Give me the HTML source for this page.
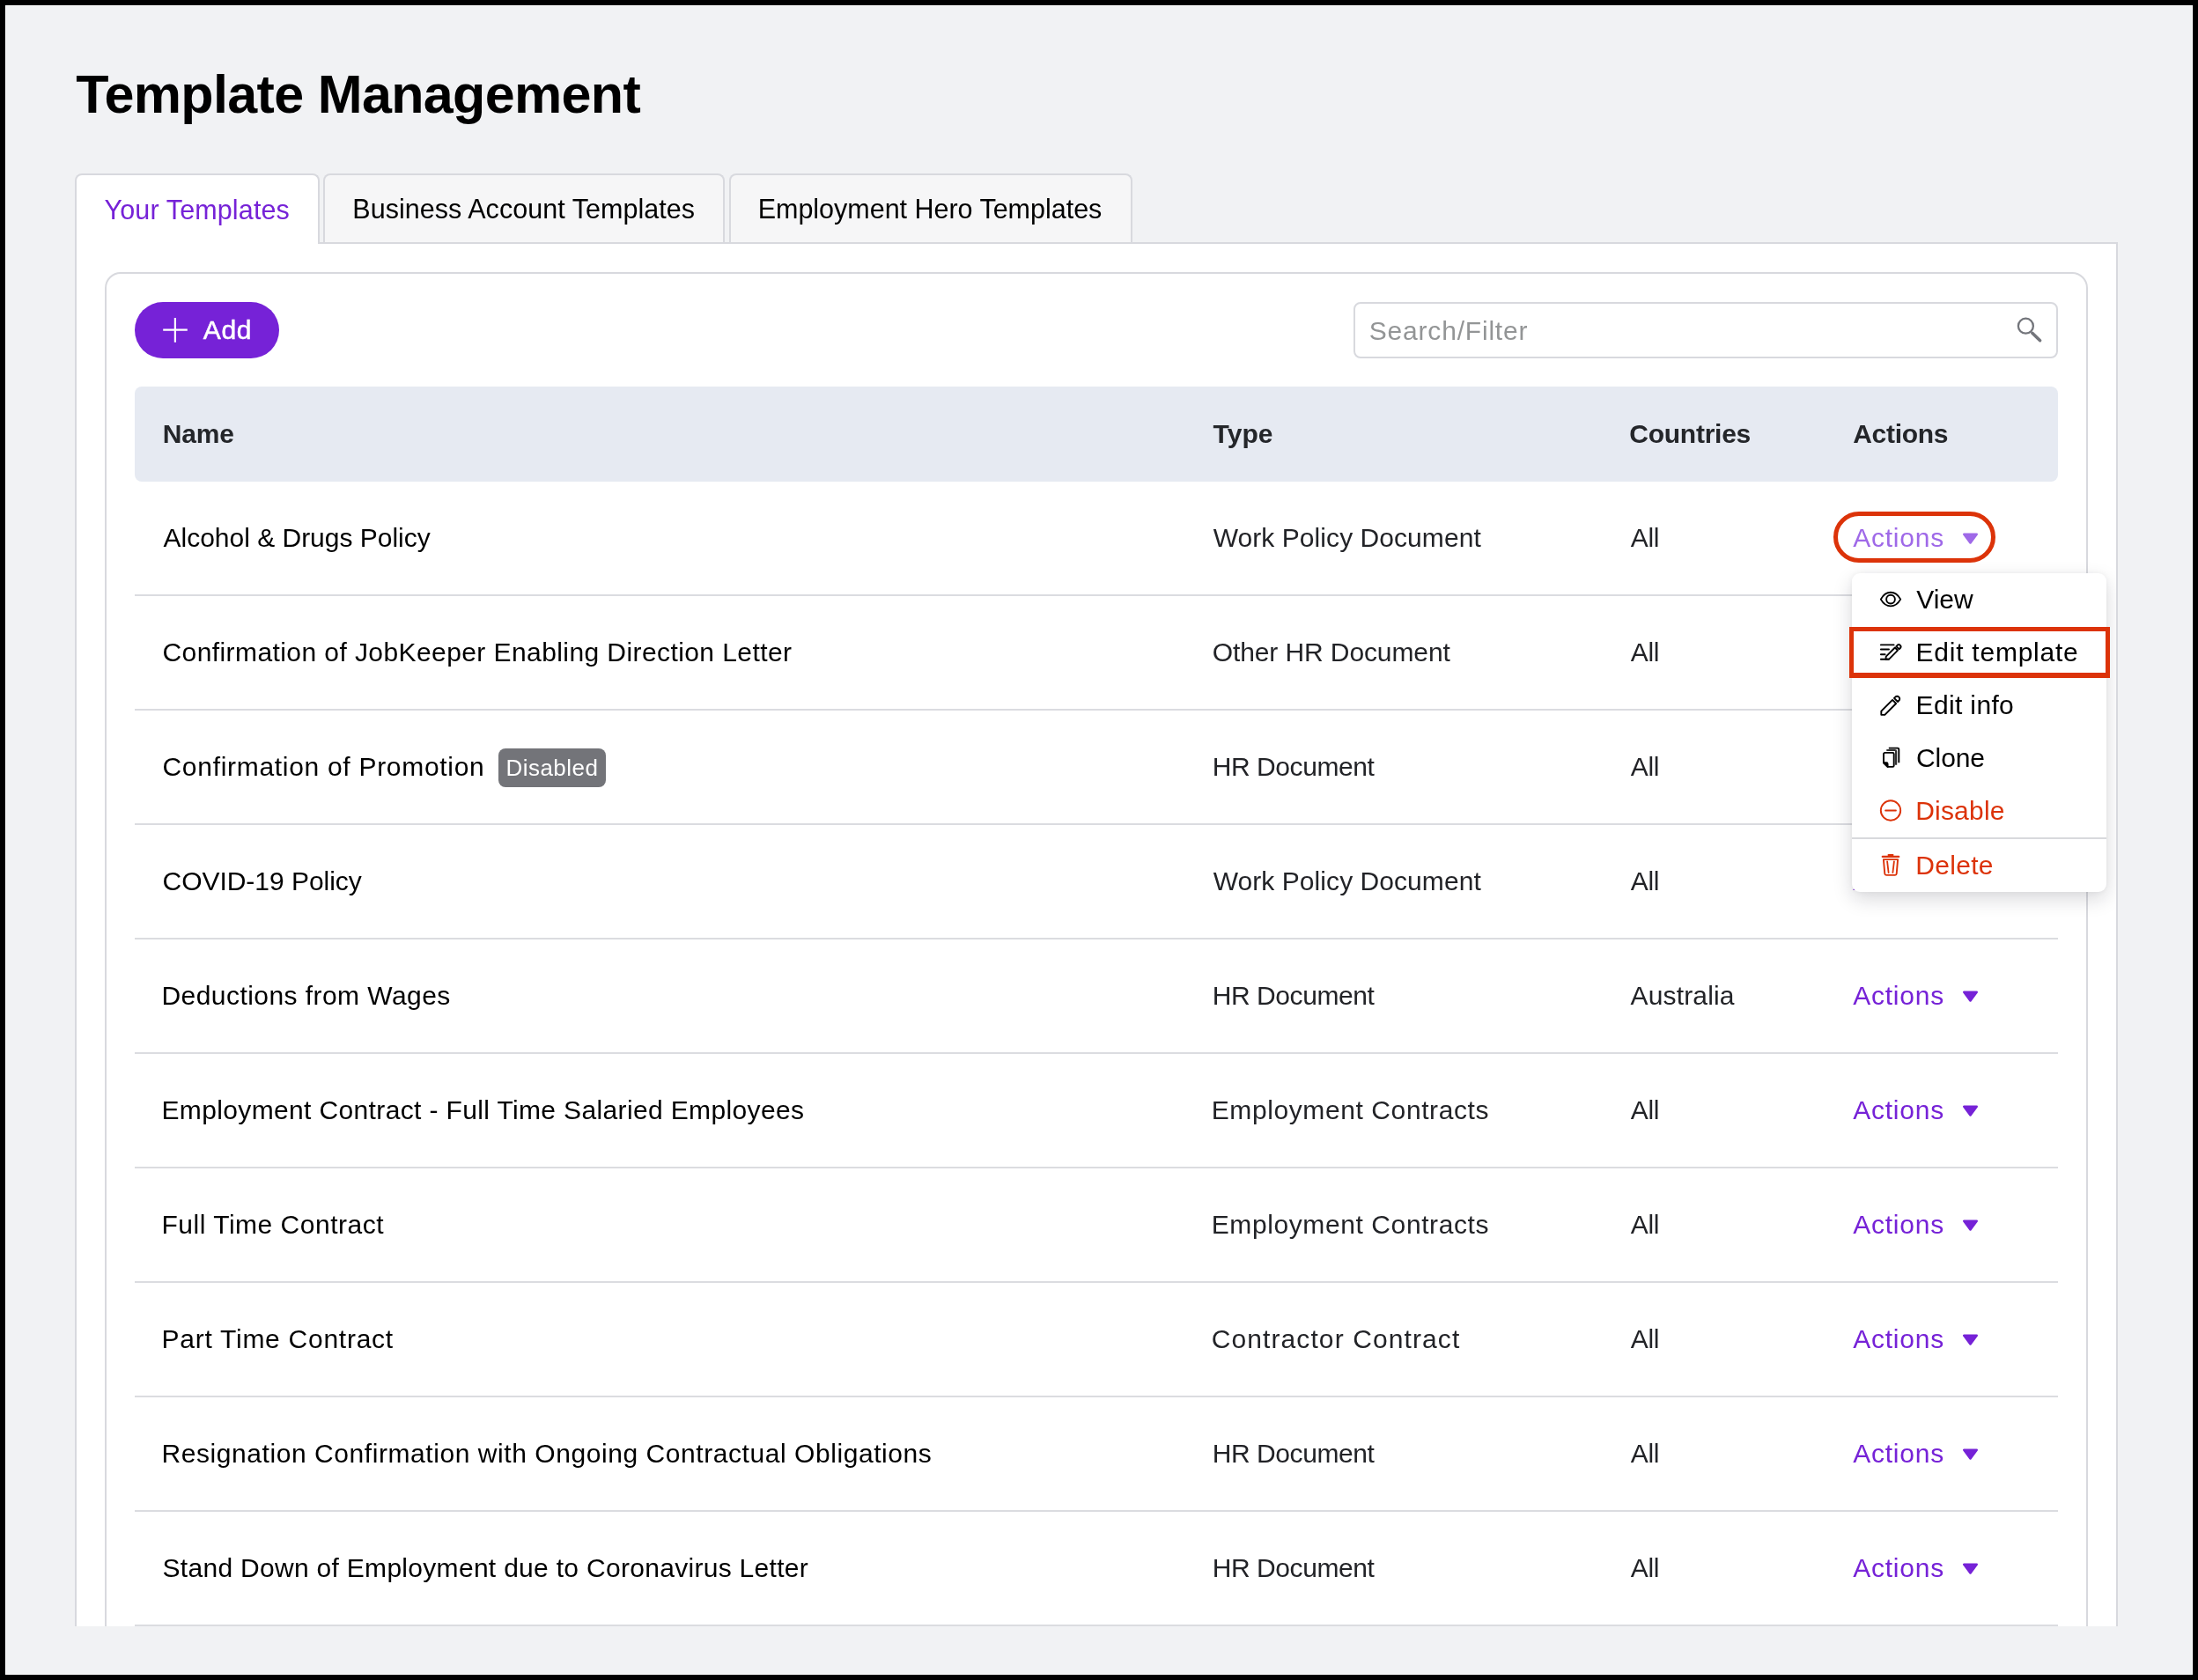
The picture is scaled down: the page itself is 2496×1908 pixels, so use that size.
<!DOCTYPE html>
<html lang="en">
<head>
<meta charset="utf-8">
<title>Template Management</title>
<style>
html,body{margin:0;padding:0;}
body{width:2496px;height:1908px;background:#000;overflow:hidden;position:relative;font-family:"Liberation Sans", sans-serif;will-change:transform;}
.frame{position:absolute;left:6px;top:6px;width:2484px;height:1896px;box-sizing:border-box;border:1px solid #fff;background:#f1f2f4;}
.t{position:absolute;white-space:nowrap;margin:0;padding:0;}
.abs{position:absolute;box-sizing:border-box;}
.panel{left:85px;top:275px;width:2320px;height:1572px;background:#fff;border:2px solid #d8d9de;border-bottom:none;overflow:hidden;}
.tab{top:197px;height:80px;border:2px solid #d8d9de;border-bottom:none;border-radius:8px 8px 0 0;background:#f6f6f7;}
.tab.on{background:#fff;}
.card{left:119px;top:309px;width:2252px;height:1600px;border:2px solid #d8d9de;border-radius:18px;background:#fff;}
.add{left:153px;top:343px;width:164px;height:64px;border-radius:32px;background:#7622d7;}
.search{left:1537px;top:343px;width:800px;height:64px;border:2px solid #d8d9de;border-radius:8px;background:#fff;}
.thead{left:153px;top:439px;width:2184px;height:108px;border-radius:8px;background:#e6eaf2;}
.div{left:153px;width:2184px;height:2px;background:#dbdce0;}
.badge{left:566px;top:850px;width:122px;height:44px;border-radius:8px;background:#737479;}
.menu{left:2103px;top:651px;width:289px;height:362px;border-radius:9px;background:#fff;box-shadow:0 8px 22px rgba(20,20,40,0.16),0 0 6px rgba(20,20,40,0.05);}
.msep{left:2103px;top:951px;width:289px;height:2px;background:#d8d9dd;}
.hl-pill{left:2082px;top:581px;width:184px;height:58px;border:5px solid #dc3309;border-radius:29px;}
.hl-rect{left:2100px;top:712px;width:296px;height:58px;border:5px solid #dc3309;border-bottom-width:6px;}
svg{position:absolute;overflow:visible;}
</style>
</head>
<body>
<div class="frame"></div>

<div class="t " id="t0" style="left:86.30px;top:68.16px;font-size:61px;line-height:79px;color:#000;font-weight:bold;letter-spacing:-0.645px;">Template Management</div>
<div class="abs panel"></div>
<div class="abs tab on" style="left:85px;width:278px;height:80px;"></div>
<div class="abs tab" style="left:367px;width:456px;height:78px;"></div>
<div class="abs tab" style="left:828px;width:458px;height:78px;"></div>
<div class="t " id="t1" style="left:118.50px;top:217.63px;font-size:30.5px;line-height:40px;color:#7622d7;letter-spacing:0.138px;">Your Templates</div>
<div class="t " id="t2" style="left:400.30px;top:216.63px;font-size:30.5px;line-height:40px;color:#000;letter-spacing:0.040px;">Business Account Templates</div>
<div class="t " id="t3" style="left:860.70px;top:216.63px;font-size:30.5px;line-height:40px;color:#000;letter-spacing:-0.016px;">Employment Hero Templates</div>
<div class="abs" style="left:87px;top:277px;width:2316px;height:1570px;overflow:hidden;"><div class="abs" style="left:-87px;top:-277px;width:2496px;height:1908px;">
<div class="abs card"></div>
<div class="abs add"></div>
<svg style="left:183px;top:359px;" width="32" height="32" viewBox="0 0 32 32"><path d="M2.2 15.6H29.8M15.9 2V29.8" stroke="#fff" stroke-width="2.2" fill="none" stroke-linecap="butt"/></svg>
<div class="t " id="t4" style="left:230.70px;top:354.71px;font-size:30px;line-height:39px;color:#fff;letter-spacing:0.700px;-webkit-text-stroke:0.5px #fff;">Add</div>
<div class="abs search"></div>
<div class="t " id="t5" style="left:1554.80px;top:356.31px;font-size:30px;line-height:39px;color:#939596;letter-spacing:0.800px;">Search/Filter</div>
<svg style="left:2286px;top:356px;" width="36" height="36" viewBox="0 0 36 36"><circle cx="14.4" cy="14.2" r="8.5" stroke="#73757b" stroke-width="2.3" fill="none"/><path d="M21.8 22.3L30.6 30.7" stroke="#73757b" stroke-width="3.6" stroke-linecap="round" fill="none"/></svg>
<div class="abs thead"></div>
<div class="t " id="t6" style="left:184.80px;top:473.00px;font-size:30px;line-height:39px;color:#24262a;font-weight:bold;letter-spacing:-0.200px;">Name</div>
<div class="t " id="t7" style="left:1377.60px;top:473.00px;font-size:30px;line-height:39px;color:#24262a;font-weight:bold;">Type</div>
<div class="t " id="t8" style="left:1850.30px;top:473.00px;font-size:30px;line-height:39px;color:#24262a;font-weight:bold;letter-spacing:-0.250px;">Countries</div>
<div class="t " id="t9" style="left:2104.20px;top:473.00px;font-size:30px;line-height:39px;color:#24262a;font-weight:bold;letter-spacing:-0.300px;">Actions</div>
<div class="t " id="t10" style="left:185.50px;top:590.81px;font-size:30px;line-height:39px;color:#000;letter-spacing:-0.010px;">Alcohol &amp; Drugs Policy</div>
<div class="t " id="t11" style="left:1377.70px;top:590.81px;font-size:30px;line-height:39px;color:#222327;letter-spacing:0.063px;">Work Policy Document</div>
<div class="t " id="t12" style="left:1851.80px;top:590.81px;font-size:30px;line-height:39px;color:#222327;letter-spacing:-0.400px;">All</div>
<div class="t " id="t13" style="left:2104.20px;top:590.81px;font-size:30px;line-height:39px;color:#9f69e8;letter-spacing:0.766px;">Actions</div>
<svg style="left:2227px;top:604px;" width="21" height="16" viewBox="0 0 21 16"><path d="M3.3 2.7H17.7L10.5 12.5Z" fill="#9f69e8" stroke="#9f69e8" stroke-width="2.6" stroke-linejoin="round"/></svg>
<div class="abs div" style="top:675px;"></div>
<div class="t " id="t14" style="left:184.50px;top:720.81px;font-size:30px;line-height:39px;color:#000;letter-spacing:0.416px;">Confirmation of JobKeeper Enabling Direction Letter</div>
<div class="t " id="t15" style="left:1376.70px;top:720.81px;font-size:30px;line-height:39px;color:#222327;letter-spacing:-0.100px;">Other HR Document</div>
<div class="t " id="t16" style="left:1851.80px;top:720.81px;font-size:30px;line-height:39px;color:#222327;letter-spacing:-0.400px;">All</div>
<div class="t " id="t17" style="left:2104.20px;top:720.81px;font-size:30px;line-height:39px;color:#7622d7;letter-spacing:0.766px;">Actions</div>
<svg style="left:2227px;top:734px;" width="21" height="16" viewBox="0 0 21 16"><path d="M3.3 2.7H17.7L10.5 12.5Z" fill="#7622d7" stroke="#7622d7" stroke-width="2.6" stroke-linejoin="round"/></svg>
<div class="abs div" style="top:805px;"></div>
<div class="t " id="t18" style="left:184.50px;top:850.81px;font-size:30px;line-height:39px;color:#000;letter-spacing:0.699px;">Confirmation of Promotion</div>
<div class="t " id="t19" style="left:1376.70px;top:850.81px;font-size:30px;line-height:39px;color:#222327;letter-spacing:-0.420px;">HR Document</div>
<div class="t " id="t20" style="left:1851.80px;top:850.81px;font-size:30px;line-height:39px;color:#222327;letter-spacing:-0.400px;">All</div>
<div class="t " id="t21" style="left:2104.20px;top:850.81px;font-size:30px;line-height:39px;color:#7622d7;letter-spacing:0.766px;">Actions</div>
<svg style="left:2227px;top:864px;" width="21" height="16" viewBox="0 0 21 16"><path d="M3.3 2.7H17.7L10.5 12.5Z" fill="#7622d7" stroke="#7622d7" stroke-width="2.6" stroke-linejoin="round"/></svg>
<div class="abs div" style="top:935px;"></div>
<div class="t " id="t22" style="left:184.50px;top:980.81px;font-size:30px;line-height:39px;color:#000;letter-spacing:-0.029px;">COVID-19 Policy</div>
<div class="t " id="t23" style="left:1377.70px;top:980.81px;font-size:30px;line-height:39px;color:#222327;letter-spacing:0.063px;">Work Policy Document</div>
<div class="t " id="t24" style="left:1851.80px;top:980.81px;font-size:30px;line-height:39px;color:#222327;letter-spacing:-0.400px;">All</div>
<div class="t " id="t25" style="left:2104.20px;top:980.81px;font-size:30px;line-height:39px;color:#7622d7;letter-spacing:0.766px;">Actions</div>
<svg style="left:2227px;top:994px;" width="21" height="16" viewBox="0 0 21 16"><path d="M3.3 2.7H17.7L10.5 12.5Z" fill="#7622d7" stroke="#7622d7" stroke-width="2.6" stroke-linejoin="round"/></svg>
<div class="abs div" style="top:1065px;"></div>
<div class="t " id="t26" style="left:183.50px;top:1110.81px;font-size:30px;line-height:39px;color:#000;letter-spacing:0.440px;">Deductions from Wages</div>
<div class="t " id="t27" style="left:1376.70px;top:1110.81px;font-size:30px;line-height:39px;color:#222327;letter-spacing:-0.420px;">HR Document</div>
<div class="t " id="t28" style="left:1851.60px;top:1110.81px;font-size:30px;line-height:39px;color:#222327;letter-spacing:0.151px;">Australia</div>
<div class="t " id="t29" style="left:2104.20px;top:1110.81px;font-size:30px;line-height:39px;color:#7622d7;letter-spacing:0.766px;">Actions</div>
<svg style="left:2227px;top:1124px;" width="21" height="16" viewBox="0 0 21 16"><path d="M3.3 2.7H17.7L10.5 12.5Z" fill="#7622d7" stroke="#7622d7" stroke-width="2.6" stroke-linejoin="round"/></svg>
<div class="abs div" style="top:1195px;"></div>
<div class="t " id="t30" style="left:183.50px;top:1240.81px;font-size:30px;line-height:39px;color:#000;letter-spacing:0.359px;">Employment Contract - Full Time Salaried Employees</div>
<div class="t " id="t31" style="left:1375.70px;top:1240.81px;font-size:30px;line-height:39px;color:#222327;letter-spacing:0.600px;">Employment Contracts</div>
<div class="t " id="t32" style="left:1851.80px;top:1240.81px;font-size:30px;line-height:39px;color:#222327;letter-spacing:-0.400px;">All</div>
<div class="t " id="t33" style="left:2104.20px;top:1240.81px;font-size:30px;line-height:39px;color:#7622d7;letter-spacing:0.766px;">Actions</div>
<svg style="left:2227px;top:1254px;" width="21" height="16" viewBox="0 0 21 16"><path d="M3.3 2.7H17.7L10.5 12.5Z" fill="#7622d7" stroke="#7622d7" stroke-width="2.6" stroke-linejoin="round"/></svg>
<div class="abs div" style="top:1325px;"></div>
<div class="t " id="t34" style="left:183.50px;top:1370.81px;font-size:30px;line-height:39px;color:#000;letter-spacing:0.506px;">Full Time Contract</div>
<div class="t " id="t35" style="left:1375.70px;top:1370.81px;font-size:30px;line-height:39px;color:#222327;letter-spacing:0.600px;">Employment Contracts</div>
<div class="t " id="t36" style="left:1851.80px;top:1370.81px;font-size:30px;line-height:39px;color:#222327;letter-spacing:-0.400px;">All</div>
<div class="t " id="t37" style="left:2104.20px;top:1370.81px;font-size:30px;line-height:39px;color:#7622d7;letter-spacing:0.766px;">Actions</div>
<svg style="left:2227px;top:1384px;" width="21" height="16" viewBox="0 0 21 16"><path d="M3.3 2.7H17.7L10.5 12.5Z" fill="#7622d7" stroke="#7622d7" stroke-width="2.6" stroke-linejoin="round"/></svg>
<div class="abs div" style="top:1455px;"></div>
<div class="t " id="t38" style="left:183.50px;top:1500.81px;font-size:30px;line-height:39px;color:#000;letter-spacing:0.741px;">Part Time Contract</div>
<div class="t " id="t39" style="left:1375.70px;top:1500.81px;font-size:30px;line-height:39px;color:#222327;letter-spacing:1.100px;">Contractor Contract</div>
<div class="t " id="t40" style="left:1851.80px;top:1500.81px;font-size:30px;line-height:39px;color:#222327;letter-spacing:-0.400px;">All</div>
<div class="t " id="t41" style="left:2104.20px;top:1500.81px;font-size:30px;line-height:39px;color:#7622d7;letter-spacing:0.766px;">Actions</div>
<svg style="left:2227px;top:1514px;" width="21" height="16" viewBox="0 0 21 16"><path d="M3.3 2.7H17.7L10.5 12.5Z" fill="#7622d7" stroke="#7622d7" stroke-width="2.6" stroke-linejoin="round"/></svg>
<div class="abs div" style="top:1585px;"></div>
<div class="t " id="t42" style="left:183.50px;top:1630.81px;font-size:30px;line-height:39px;color:#000;letter-spacing:0.564px;">Resignation Confirmation with Ongoing Contractual Obligations</div>
<div class="t " id="t43" style="left:1376.70px;top:1630.81px;font-size:30px;line-height:39px;color:#222327;letter-spacing:-0.420px;">HR Document</div>
<div class="t " id="t44" style="left:1851.80px;top:1630.81px;font-size:30px;line-height:39px;color:#222327;letter-spacing:-0.400px;">All</div>
<div class="t " id="t45" style="left:2104.20px;top:1630.81px;font-size:30px;line-height:39px;color:#7622d7;letter-spacing:0.766px;">Actions</div>
<svg style="left:2227px;top:1644px;" width="21" height="16" viewBox="0 0 21 16"><path d="M3.3 2.7H17.7L10.5 12.5Z" fill="#7622d7" stroke="#7622d7" stroke-width="2.6" stroke-linejoin="round"/></svg>
<div class="abs div" style="top:1715px;"></div>
<div class="t " id="t46" style="left:184.50px;top:1760.81px;font-size:30px;line-height:39px;color:#000;letter-spacing:0.298px;">Stand Down of Employment due to Coronavirus Letter</div>
<div class="t " id="t47" style="left:1376.70px;top:1760.81px;font-size:30px;line-height:39px;color:#222327;letter-spacing:-0.420px;">HR Document</div>
<div class="t " id="t48" style="left:1851.80px;top:1760.81px;font-size:30px;line-height:39px;color:#222327;letter-spacing:-0.400px;">All</div>
<div class="t " id="t49" style="left:2104.20px;top:1760.81px;font-size:30px;line-height:39px;color:#7622d7;letter-spacing:0.766px;">Actions</div>
<svg style="left:2227px;top:1774px;" width="21" height="16" viewBox="0 0 21 16"><path d="M3.3 2.7H17.7L10.5 12.5Z" fill="#7622d7" stroke="#7622d7" stroke-width="2.6" stroke-linejoin="round"/></svg>
<div class="abs div" style="top:1845px;"></div>
<div class="abs badge"></div>
<div class="t " id="t50" style="left:574.50px;top:855.39px;font-size:26px;line-height:34px;color:#fff;letter-spacing:0.457px;">Disabled</div>
<div class="abs hl-pill"></div>
<div class="abs menu"></div>
<div class="abs msep"></div>
<div class="t " id="t51" style="left:2176.20px;top:660.71px;font-size:30px;line-height:39px;color:#000;">View</div>
<div class="t " id="t52" style="left:2175.60px;top:720.71px;font-size:30px;line-height:39px;color:#000;letter-spacing:0.750px;">Edit template</div>
<div class="t " id="t53" style="left:2175.60px;top:780.50px;font-size:30px;line-height:39px;color:#000;letter-spacing:0.350px;">Edit info</div>
<div class="t " id="t54" style="left:2176.00px;top:840.50px;font-size:30px;line-height:39px;color:#000;letter-spacing:-0.100px;">Clone</div>
<div class="t " id="t55" style="left:2175.20px;top:900.71px;font-size:30px;line-height:39px;color:#dc3309;letter-spacing:0.200px;">Disable</div>
<div class="t " id="t56" style="left:2175.20px;top:962.90px;font-size:30px;line-height:39px;color:#dc3309;letter-spacing:0.320px;">Delete</div>
<svg style="left:2133px;top:668px;" width="28" height="26" viewBox="0 0 28 26"><path d="M2.8 12.6C6 7 9.8 4.8 14 4.8S22 7 25.2 12.6C22 18.2 18.2 20.4 14 20.4S6 18.2 2.8 12.6Z" stroke="#000" stroke-width="1.9" fill="none" stroke-linejoin="round"/><circle cx="14" cy="12.6" r="4.9" stroke="#000" stroke-width="1.9" fill="none"/></svg>
<svg style="left:2133px;top:727px;" width="28" height="26" viewBox="0 0 28 26"><g stroke="#000" stroke-width="1.9" fill="none" stroke-linecap="round" stroke-linejoin="round"><path d="M2.9 5.4H17.6M2.9 10.5H12M2.9 16.3H7.6M2.9 21.8H11.6"/><path d="M8.7 18.7L18.9 8.5L22 11.7L11.9 21.8H8.5Z"/><path d="M20.3 7.1L21.6 5.8A2.3 2.3 0 0 1 24.9 9L23.6 10.3Z"/></g></svg>
<svg style="left:2133px;top:787px;" width="28" height="28" viewBox="0 0 28 28"><g transform="translate(0.95 1.0) scale(0.95)" stroke="#000" stroke-width="2" fill="none" stroke-linejoin="round" stroke-linecap="round"><path d="M2.5 20.6L15.9 7.3L20.2 11.6L6.7 25.1H2.5Z"/><path d="M17.9 5.2L19.3 3.8A3 3 0 0 1 23.6 8.1L22.2 9.5Z"/></g></svg>
<svg style="left:2136px;top:847px;" width="24" height="27" viewBox="0 0 24 27"><g stroke="#000" stroke-width="1.9" fill="none" stroke-linejoin="round"><path d="M4.4 7.9H13.3A1.4 1.4 0 0 1 14.7 9.3V22.5A1.4 1.4 0 0 1 13.3 23.9H7.6L3 19.3V9.3A1.4 1.4 0 0 1 4.4 7.9Z"/><path d="M3 19.3H6.2A1.4 1.4 0 0 1 7.6 20.7V23.9Z" fill="#000"/><path d="M6.3 5H15.8A1.3 1.3 0 0 1 17.1 6.3V21.8" stroke="#333" stroke-width="2.2"/><path d="M8.8 2.6H18.9A1.4 1.4 0 0 1 20.3 4V19.2"/></g></svg>
<svg style="left:2133px;top:906px;" width="28" height="29" viewBox="0 0 28 29"><circle cx="14" cy="14.5" r="11.2" stroke="#dc3309" stroke-width="1.9" fill="none"/><path d="M8.1 14.5H19.9" stroke="#dc3309" stroke-width="1.9" stroke-linecap="round"/></svg>
<svg style="left:2133px;top:967px;" width="28" height="30" viewBox="0 0 28 30"><g stroke="#dc3309" fill="none" stroke-linecap="round" stroke-linejoin="round"><path d="M4.8 5.9H23.2" stroke-width="2.3"/><path d="M11.6 4.1H16.4" stroke-width="2.2"/><path d="M5.9 9.1H22.1L20.7 25.3A1.7 1.7 0 0 1 19 26.9H9A1.7 1.7 0 0 1 7.3 25.3Z" stroke-width="1.9"/><path d="M10.1 11.4L11.6 24M17.9 11.4L16.4 24" stroke-width="1.8"/></g></svg>
<div class="abs hl-rect"></div>
</div></div>
</body>
</html>
